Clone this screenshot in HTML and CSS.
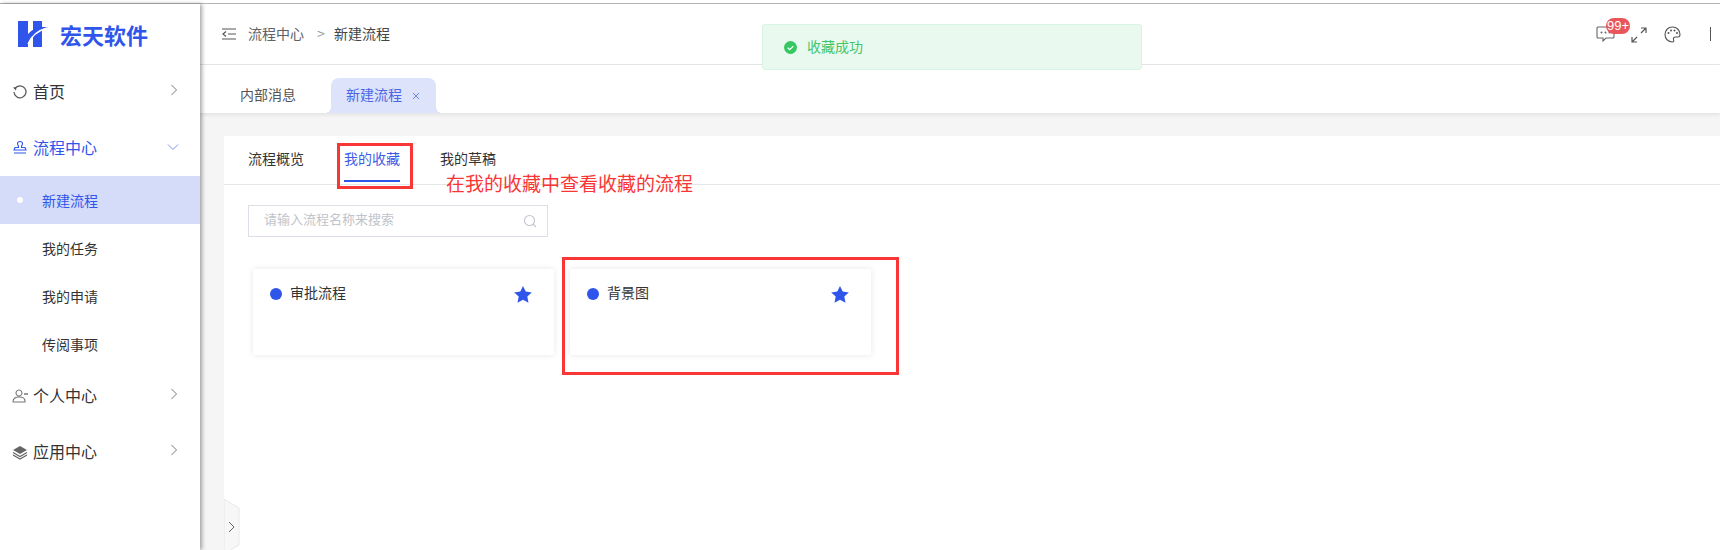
FILE: index.html
```html
<!DOCTYPE html>
<html lang="zh-CN">
<head>
<meta charset="utf-8">
<title>新建流程</title>
<link rel="stylesheet" href="styles.css">
</head>
<body>
<div class="topline"></div>
<div class="app">
  <aside class="sidebar">
    <div class="brand">
      <svg class="logo" width="30" height="26" viewBox="0 0 30 26"><path fill="#2f55eb" d="M0 0h10v26H0zM15 0h9v26h-9z"/><path fill="#2f55eb" d="M10 13Q15 7 24 6h6Q18 9 10 22z"/><path fill="none" stroke="#fff" stroke-width="1.400" d="M10 23Q15 11 29 7"/></svg>
      <span class="brand-name">宏天软件</span>
    </div>
    <div class="menu-item">
      <svg class="mi" viewBox="0 0 16 16" width="16" height="16"><path fill="none" stroke="#555" stroke-width="1.200" d="M3 4.500A6 6 0 1 1 2 8"/><path fill="#555" d="M1 3.500l3.500-.5-.5 3.500z"/></svg>
      <span class="label">首页</span>
      <svg class="chev" viewBox="0 0 8 12" width="8" height="12"><path d="M1.500 1l5 5-5 5" fill="none" stroke="#777" stroke-width="1"/></svg>
    </div>
    <div class="menu-item active">
      <svg class="mi" viewBox="0 0 16 16" width="16" height="16"><path fill="none" stroke="#2f55eb" stroke-width="1.100" d="M5.500 3.500a2.500 2 0 0 1 5 0q0 1.500-1 2.500v1.500h3.500l1 2.500H2l1-2.500h3.500V6q-1-1-1-2.500zM2 13h12"/></svg>
      <span class="label">流程中心</span>
      <svg class="chev down" viewBox="0 0 12 8" width="12" height="8"><path d="M1 1.500l5 5 5-5" fill="none" stroke="#7b92ef" stroke-width="1"/></svg>
    </div>
    <div class="sub selected"><i class="sub-dot"></i>新建流程</div>
    <div class="sub">我的任务</div>
    <div class="sub">我的申请</div>
    <div class="sub">传阅事项</div>
    <div class="menu-item">
      <svg class="mi" viewBox="0 0 16 16" width="16" height="16"><path fill="none" stroke="#777" stroke-width="1.100" d="M7 2a3 3 0 1 1-.01 0zM1 14q0-5 6-5t6 4v1z"/><path stroke="#777" stroke-width="1.500" d="M12 6h4"/></svg>
      <span class="label">个人中心</span>
      <svg class="chev" viewBox="0 0 8 12" width="8" height="12"><path d="M1.500 1l5 5-5 5" fill="none" stroke="#777" stroke-width="1"/></svg>
    </div>
    <div class="menu-item">
      <svg class="mi" viewBox="0 0 16 16" width="16" height="16"><path fill="#666" d="M8 2l7 4-7 4-7-4z"/><path fill="none" stroke="#666" stroke-width="1.200" d="M1 8.500l7 4 7-4M1 11l7 4 7-4"/></svg>
      <span class="label">应用中心</span>
      <svg class="chev" viewBox="0 0 8 12" width="8" height="12"><path d="M1.500 1l5 5-5 5" fill="none" stroke="#777" stroke-width="1"/></svg>
    </div>
  </aside>
  <main class="main">
    <header class="header">
      <svg class="fold" width="15" height="12" viewBox="0 0 15 12"><path fill="none" stroke="#555" stroke-width="1.200" d="M0 1h14M6 6h8M0 11h14M4 3.500L1 6l3 2.500"/></svg>
      <span class="crumb">流程中心</span>
      <span class="crumb-sep">&gt;</span>
      <span class="crumb cur">新建流程</span>
      <div class="tools">
        <span class="msg">
          <svg width="19" height="16" viewBox="0 0 19 16"><path fill="none" stroke="#666" stroke-width="1.100" d="M2 1h15q1 0 1 1v9q0 1-1 1h-7l-3 3v-3H2q-1 0-1-1V2q0-1 1-1z"/><circle cx="5.500" cy="6.500" r="1" fill="#666"/><circle cx="9.500" cy="6.500" r="1" fill="#666"/><circle cx="13.500" cy="6.500" r="1" fill="#666"/></svg>
          <b class="badge">99+</b>
        </span>
        <svg class="full" width="16" height="16" viewBox="0 0 16 16"><path fill="none" stroke="#555" stroke-width="1.200" d="M10 1h5v5M15 1L10 6M6 15H1v-5M1 15l5-5"/></svg>
        <svg class="palette" width="17" height="17" viewBox="0 0 17 17"><path fill="none" stroke="#555" stroke-width="1.100" d="M8.500 1C4 1 1 4.500 1 8.500S4 16 8.500 16c1.500 0 1.500-1.500 1-2.500-.5-1.500.5-2.500 2-2.500H14c1.500 0 2-1 2-2.500C16 4.500 13 1 8.500 1z"/><circle cx="4.500" cy="7" r="1" fill="#555"/><circle cx="7" cy="4.500" r="1" fill="#555"/><circle cx="10.500" cy="4.500" r="1" fill="#555"/><circle cx="13" cy="7" r="1" fill="#555"/></svg>
        <i class="vline"></i>
      </div>
    </header>
    <nav class="pagetabs">
      <span class="ptab">内部消息</span>
      <span class="ptab on">新建流程<svg class="x" width="8" height="8" viewBox="0 0 8 8"><path d="M1 1l6 6M7 1L1 7" stroke="#6d84e8" stroke-width="1" fill="none"/></svg></span>
    </nav>
    <section class="content">
      <div class="panel">
        <div class="tabs">
          <span class="tab">流程概览</span>
          <span class="tab on">我的收藏</span>
          <span class="tab">我的草稿</span>
        </div>
        <div class="search">
          <span class="ph">请输入流程名称来搜索</span>
          <svg class="lens" width="14" height="14" viewBox="0 0 14 14"><circle cx="6.500" cy="6.500" r="5" fill="none" stroke="#c0c4cc" stroke-width="1.100"/><path d="M10 10l3 3" stroke="#c0c4cc" stroke-width="1.100"/></svg>
        </div>
        <div class="cards">
          <div class="card">
            <i class="dot"></i><span class="name">审批流程</span>
            <svg class="star" width="18" height="17" viewBox="0 0 18 17"><path fill="#2f55eb" d="M9 0l2.700 5.600 6.100.8-4.500 4.200 1.200 6.100L9 13.700l-5.500 3 1.200-6.100L.2 6.400l6.100-.8z"/></svg>
          </div>
          <div class="card">
            <i class="dot"></i><span class="name">背景图</span>
            <svg class="star" width="18" height="17" viewBox="0 0 18 17"><path fill="#2f55eb" d="M9 0l2.700 5.600 6.100.8-4.500 4.200 1.200 6.100L9 13.700l-5.500 3 1.200-6.100L.2 6.400l6.100-.8z"/></svg>
          </div>
        </div>
      </div>
      <div class="handle">
        <svg width="16" height="56" viewBox="0 0 16 56"><path d="M0 0l15 9v37L0 55z" fill="#f7f7f7" stroke="#e8e8e8"/><path d="M5 23l5 5-5 5" fill="none" stroke="#666" stroke-width="1"/></svg>
      </div>
    </section>
  </main>
</div>
<div class="toast">
  <svg width="13" height="13" viewBox="0 0 13 13"><circle cx="6.500" cy="6.500" r="6.500" fill="#35c860"/><path d="M3.700 6.700l2 1.900 3.600-3.500" fill="none" stroke="#fff" stroke-width="1.300"/></svg>
  <span class="toast-text">收藏成功</span>
</div>
<div class="mark mark-tab"></div>
<div class="mark mark-card"></div>
<div class="note">在我的收藏中查看收藏的流程</div>
</body>
</html>
```
FILE: styles.css
```css
* { box-sizing: border-box; }
html { height: 550px; overflow: hidden; }
body {
  margin: 0;
  position: relative;
  height: 550px;
  overflow: hidden;
  background: #fff;
  font-family: "Noto Sans CJK SC", "Noto Sans", sans-serif;
  font-size: 14px;
  color: #333;
  padding-top: 3px;
}
.topline { height: 1px; background: #b5b5b5; }
.app { display: flex; height: 546px; }

.sidebar {
  width: 200px;
  flex: none;
  background: #fff;
  position: relative;
  z-index: 2;
  box-shadow: 2px 0 4px rgba(0, 0, 0, .35);
}
.brand { height: 60px; display: flex; align-items: center; padding-left: 18px; }
.logo { margin-right: 12px; }
.brand-name { font-size: 22px; font-weight: 700; color: #2f55eb; line-height: 1; }
.menu-item {
  height: 56px;
  display: flex;
  align-items: center;
  padding-left: 12px;
  font-size: 16px;
  color: #333;
  position: relative;
}
.menu-item .label { margin-bottom: 3px; }
.menu-item .mi { margin-right: 5px; flex: none; }
.menu-item .chev { position: absolute; right: 22px; top: 20px; }
.menu-item .chev.down { right: 21px; top: 23px; }
.menu-item.active { color: #2f55eb; }
.sub {
  height: 48px;
  display: flex;
  align-items: center;
  padding-left: 42px;
  position: relative;
  color: #333;
}
.sub.selected { background: #d5dcf9; color: #2f55eb; }
.sub-dot {
  position: absolute;
  left: 17px;
  top: 21px;
  width: 6px;
  height: 6px;
  border-radius: 50%;
  background: #fff;
}

.main { flex: 1; min-width: 0; display: flex; flex-direction: column; }
.header {
  height: 61px;
  flex: none;
  border-bottom: 1px solid #e6e6e6;
  display: flex;
  align-items: center;
  padding-left: 22px;
}
.fold { margin-right: 11px; }
.crumb { color: #606266; margin-bottom: 3px; }
.crumb.cur { color: #444; }
.crumb-sep { color: #999; margin: 0 9px 3px 13px; width: 8px; }
.tools { margin-left: auto; display: flex; align-items: center; height: 100%; padding-right: 9px; }
.msg { position: relative; display: flex; margin-right: 16px; }
.badge {
  position: absolute;
  left: 10px;
  top: -8px;
  width: 24px;
  height: 16px;
  border-radius: 8px;
  background: #e8555a;
  color: #fff;
  font: 400 13px/15px "Liberation Sans", sans-serif;
  text-align: center;
}
.full { margin-right: 17px; margin-top: 2px; }
.palette { margin-right: 29px; }
.vline { width: 1px; height: 14px; background: #555; }

.pagetabs {
  height: 48px;
  flex: none;
  display: flex;
  align-items: flex-end;
  padding-left: 24px;
  position: relative;
  z-index: 1;
  box-shadow: 0 2px 4px rgba(0, 0, 0, .08);
}
.ptab { height: 35px; display: flex; align-items: center; padding: 0 16px 3px; color: #555; }
.ptab.on {
  margin-left: 19px;
  width: 105px;
  padding-left: 15px;
  background: #dde3fb;
  color: #4a66e6;
  border-radius: 8px 8px 0 0;
  position: relative;
}
.ptab.on::before,
.ptab.on::after {
  content: "";
  position: absolute;
  bottom: 0;
  width: 6px;
  height: 6px;
}
.ptab.on::before { left: -6px; background: radial-gradient(circle at 0 0, transparent 6px, #dde3fb 6px); }
.ptab.on::after { right: -6px; background: radial-gradient(circle at 100% 0, transparent 6px, #dde3fb 6px); }
.ptab .x { margin-left: 10px; margin-top: 3px; }

.content { flex: 1; min-height: 0; background: #f5f5f5; padding: 23px 0 0 24px; position: relative; }
.panel { background: #fff; height: 100%; }
.tabs {
  height: 49px;
  display: flex;
  gap: 40px;
  padding-left: 24px;
  border-bottom: 1px solid #e6e6e6;
}
.tab { height: 46px; line-height: 45px; border-bottom: 2px solid transparent; color: #333; }
.tab.on { color: #3d5de8; border-bottom-color: #2f55eb; }
.search {
  margin: 20px 0 0 24px;
  width: 300px;
  height: 32px;
  border: 1px solid #dcdfe6;
  display: flex;
  align-items: center;
  justify-content: space-between;
  padding: 0 10px 0 15px;
}
.ph { color: #c0c4cc; font-size: 13px; margin-bottom: 5px; }
.lens { margin-bottom: 1px; }
.cards { display: grid; grid-template-columns: 301px 301px; gap: 16px; margin: 32px 0 0 29px; }
.card {
  height: 86px;
  background: #fff;
  border-radius: 2px;
  box-shadow: 0 0 6px rgba(0, 0, 0, .1);
  display: flex;
  align-items: flex-start;
  padding: 16px 22px 0 17px;
}
.dot { width: 12px; height: 12px; border-radius: 50%; background: #2f55eb; margin: 3px 8px 0 0; flex: none; }
.name { line-height: 20px; color: #333; margin-top: -3px; }
.star { margin-left: auto; margin-top: 1px; }
.handle { position: absolute; left: 24px; bottom: -5px; height: 56px; display: flex; }

.toast {
  position: absolute;
  left: 762px;
  top: 24px;
  width: 380px;
  height: 46px;
  background: #e9f9f0;
  border: 1px solid #d8f3e2;
  border-radius: 3px;
  display: flex;
  align-items: center;
  gap: 11px;
  padding-left: 21px;
  color: #43c668;
  z-index: 5;
}
.toast-text { margin-bottom: 3px; margin-left: -1px; }
.mark { position: absolute; border: 3px solid #f93636; z-index: 4; }
.mark-tab { left: 337px; top: 143px; width: 76px; height: 46px; }
.mark-card { left: 562px; top: 257px; width: 337px; height: 118px; }
.note {
  position: absolute;
  left: 446px;
  top: 169px;
  font-size: 19px;
  line-height: 28px;
  color: #f93636;
  z-index: 4;
}
```
